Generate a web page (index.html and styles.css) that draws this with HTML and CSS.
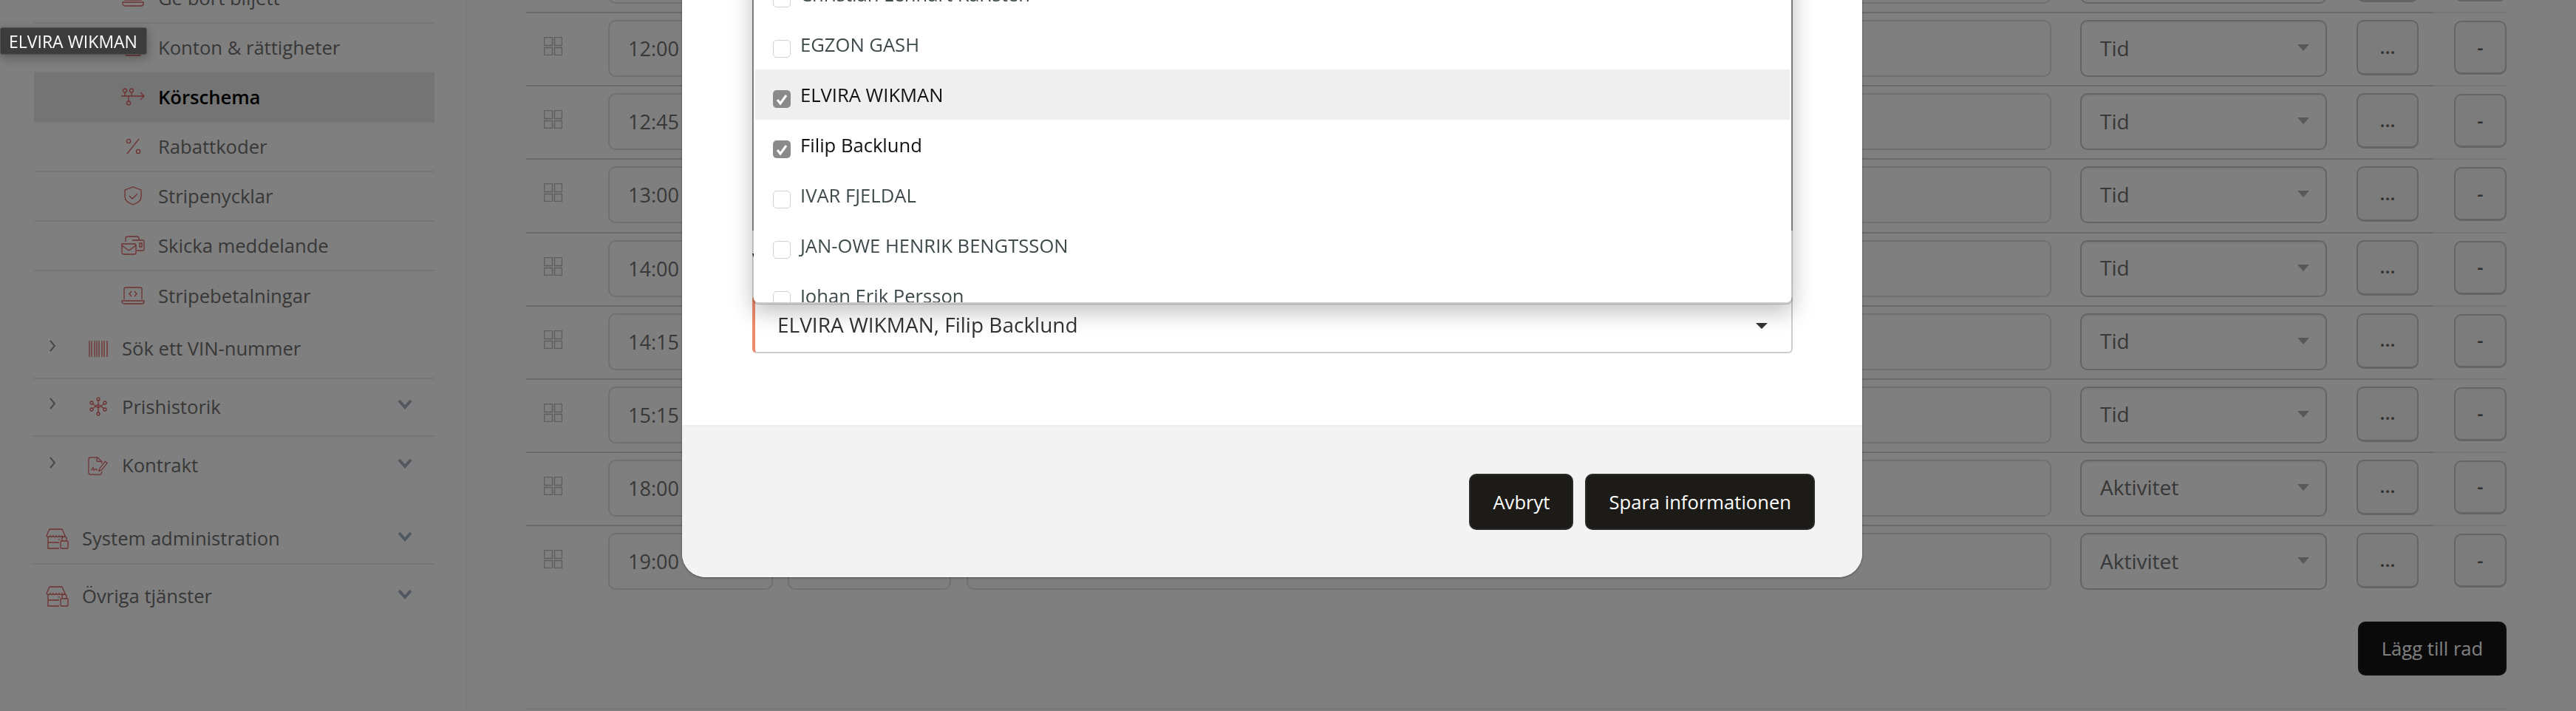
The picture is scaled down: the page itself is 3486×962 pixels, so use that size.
FILE: index.html

```html
<!DOCTYPE html>
<html lang="sv">
<head>
    <meta charset="UTF-8">
    <title>Körschema</title>
    <link rel="stylesheet" href="styles.css">
</head>
<body>
    <div class="page">
        <!-- Sidebar -->
        <nav class="side">
            <ul class="sub-list">
                <li class="sub-item">
                    <svg class="icon" width="32" height="26" viewBox="0 0 32 26"><path d="M5 2h22v14H5zM2 19h28v2a3 3 0 0 1-3 3H5a3 3 0 0 1-3-3z"/></svg>
                    <span>Ge bort biljett</span>
                </li>
                <li class="sub-item">
                    <svg class="icon" width="32" height="26" viewBox="0 0 32 26"><path d="M5 2h22v14H5zM5 19h22v2a3 3 0 0 1-3 3H8a3 3 0 0 1-3-3z"/></svg>
                    <span>Konton &amp; rättigheter</span>
                </li>
                <li class="sub-item active">
                    <svg class="icon" width="32" height="24" viewBox="0 0 32 24"><path d="M0 11h31M26 6l5 5-5 5M5 6v5M14 6v5M10 11v7"/><circle cx="5" cy="3.5" r="2.5"/><circle cx="14" cy="3.5" r="2.5"/><circle cx="10" cy="20.5" r="2.5"/></svg>
                    <span>Körschema</span>
                </li>
                <li class="sub-item">
                    <svg class="icon" width="32" height="22" viewBox="0 0 32 22"><path d="M8 21L24 1"/><circle cx="10" cy="4" r="2.6"/><circle cx="23" cy="18" r="2.6"/></svg>
                    <span>Rabattkoder</span>
                </li>
                <li class="sub-item">
                    <svg class="icon" width="32" height="26" viewBox="0 0 32 26"><path d="M16 1l11 4v9c0 5-5 9-11 11C10 23 5 19 5 14V5zM11 13l4 4 7-7"/></svg>
                    <span>Stripenycklar</span>
                </li>
                <li class="sub-item">
                    <svg class="icon" width="32" height="26" viewBox="0 0 32 26"><path d="M6 8V4a3 3 0 0 1 3-3h12a3 3 0 0 1 3 3v2M15 6h14a2 2 0 0 1 2 2v10a2 2 0 0 1-2 2h-8M1 11h17a2 2 0 0 1 2 2v10a2 2 0 0 1-2 2H3a2 2 0 0 1-2-2zM1 13l9.500 7 9.500-7M25 10h3v5h-3z"/></svg>
                    <span>Skicka meddelande</span>
                </li>
                <li class="sub-item">
                    <svg class="icon" width="32" height="24" viewBox="0 0 32 24"><path d="M4 17V3a2 2 0 0 1 2-2h20a2 2 0 0 1 2 2v14M1 19h30v1a3 3 0 0 1-3 3H4a3 3 0 0 1-3-3zM14 6l-3 3.500 3 3.500M18 6l3 3.500-3 3.500"/></svg>
                    <span>Stripebetalningar</span>
                </li>
            </ul>

            <ul class="group-list">
                <li class="group-item">
                    <svg class="arrow" width="8" height="16" viewBox="0 0 8 16"><path d="M1 1l6 7-6 7"/></svg>
                    <svg class="icon" width="28" height="22" viewBox="0 0 28 22"><path d="M2 0v22M5 0v22M9 0v22M12 0v22M15 0v22M19 0v22M22 0v22M26 0v22"/></svg>
                    <span>Sök ett VIN-nummer</span>
                </li>
                <li class="group-item">
                    <svg class="arrow" width="8" height="16" viewBox="0 0 8 16"><path d="M1 1l6 7-6 7"/></svg>
                    <svg class="icon" width="28" height="26" viewBox="0 0 28 26"><path d="M14 4v18M6 9l8 6 8-6M6 16l8-6 8 6"/><circle cx="14" cy="3" r="2"/><circle cx="14" cy="23" r="2"/><circle cx="5" cy="8" r="2"/><circle cx="23" cy="8" r="2"/><circle cx="5" cy="17" r="2"/><circle cx="23" cy="17" r="2"/></svg>
                    <span>Prishistorik</span>
                    <svg class="down" width="20" height="14" viewBox="0 0 20 14"><path d="M2 2l8 9 8-9"/></svg>
                </li>
                <li class="group-item">
                    <svg class="arrow" width="8" height="16" viewBox="0 0 8 16"><path d="M1 1l6 7-6 7"/></svg>
                    <svg class="icon" width="28" height="26" viewBox="0 0 30 26"><path d="M20 10V7l-6-6H4a3 3 0 0 0-3 3v19a3 3 0 0 0 3 3h13a3 3 0 0 0 3-3v-2M13 1v6h7M20 19l8-10-3-2-8 10-1 4zM5 20c2-5 3-5 3-2s2 1 3 0 1 2 3 1"/></svg>
                    <span>Kontrakt</span>
                    <svg class="down" width="20" height="14" viewBox="0 0 20 14"><path d="M2 2l8 9 8-9"/></svg>
                </li>
            </ul>

            <ul class="top-list">
                <li class="top-item">
                    <svg class="icon" width="32" height="28" viewBox="0 0 32 28"><path d="M6 1h17l4 9c-1 2-3 2-4 0-1 2-3 2-4 0-1 2-3 2-4 0-1 2-3 2-4 0-1 2-3 2-4 0-1 2-4 2-5 0zM4 12v15h15M4 19h15M19 14v2M22 27h8a1 1 0 0 0 1-1v-8a1 1 0 0 0-1-1h-8a1 1 0 0 0-1 1v8a1 1 0 0 0 1 1zM23 17v-3a3 3 0 0 1 6 0v3"/></svg>
                    <span>System administration</span>
                    <svg class="down" width="20" height="14" viewBox="0 0 20 14"><path d="M2 2l8 9 8-9"/></svg>
                </li>
                <li class="top-item">
                    <svg class="icon" width="32" height="28" viewBox="0 0 32 28"><path d="M6 1h17l4 9c-1 2-3 2-4 0-1 2-3 2-4 0-1 2-3 2-4 0-1 2-3 2-4 0-1 2-3 2-4 0-1 2-4 2-5 0zM4 12v15h15M4 19h15M19 14v2M22 27h8a1 1 0 0 0 1-1v-8a1 1 0 0 0-1-1h-8a1 1 0 0 0-1 1v8a1 1 0 0 0 1 1zM23 17v-3a3 3 0 0 1 6 0v3"/></svg>
                    <span>Övriga tjänster</span>
                    <svg class="down" width="20" height="14" viewBox="0 0 20 14"><path d="M2 2l8 9 8-9"/></svg>
                </li>
            </ul>
        </nav>

        <!-- Schedule rows -->
        <main class="schedule">
            <div class="row">
                <div class="row-main">
                    <svg class="grip" width="25" height="25" viewBox="0 0 25 25"><path d="M.5.5h11v11H.5zM14.500.5h10v11h-10zM.5 14.500h11v10H.5zM14.500 14.500h10v10h-10z"/></svg>
                    <div class="field time">11:30</div>
                    <div class="field stop"></div>
                    <div class="field note"></div>
                    <div class="field pick">Tid<i class="caret"></i></div>
                    <button class="btn-more">...</button>
                </div>
                <div class="row-end"><button class="btn-minus">-</button></div>
            </div>
            <div class="row">
                <div class="row-main">
                    <svg class="grip" width="25" height="25" viewBox="0 0 25 25"><path d="M.5.5h11v11H.5zM14.500.5h10v11h-10zM.5 14.500h11v10H.5zM14.500 14.500h10v10h-10z"/></svg>
                    <div class="field time">12:00</div>
                    <div class="field stop"></div>
                    <div class="field note"></div>
                    <div class="field pick">Tid<i class="caret"></i></div>
                    <button class="btn-more">...</button>
                </div>
                <div class="row-end"><button class="btn-minus">-</button></div>
            </div>
            <div class="row">
                <div class="row-main">
                    <svg class="grip" width="25" height="25" viewBox="0 0 25 25"><path d="M.5.5h11v11H.5zM14.500.5h10v11h-10zM.5 14.500h11v10H.5zM14.500 14.500h10v10h-10z"/></svg>
                    <div class="field time">12:45</div>
                    <div class="field stop"></div>
                    <div class="field note"></div>
                    <div class="field pick">Tid<i class="caret"></i></div>
                    <button class="btn-more">...</button>
                </div>
                <div class="row-end"><button class="btn-minus">-</button></div>
            </div>
            <div class="row">
                <div class="row-main">
                    <svg class="grip" width="25" height="25" viewBox="0 0 25 25"><path d="M.5.5h11v11H.5zM14.500.5h10v11h-10zM.5 14.500h11v10H.5zM14.500 14.500h10v10h-10z"/></svg>
                    <div class="field time">13:00</div>
                    <div class="field stop"></div>
                    <div class="field note"></div>
                    <div class="field pick">Tid<i class="caret"></i></div>
                    <button class="btn-more">...</button>
                </div>
                <div class="row-end"><button class="btn-minus">-</button></div>
            </div>
            <div class="row">
                <div class="row-main">
                    <svg class="grip" width="25" height="25" viewBox="0 0 25 25"><path d="M.5.5h11v11H.5zM14.500.5h10v11h-10zM.5 14.500h11v10H.5zM14.500 14.500h10v10h-10z"/></svg>
                    <div class="field time">14:00</div>
                    <div class="field stop"></div>
                    <div class="field note"></div>
                    <div class="field pick">Tid<i class="caret"></i></div>
                    <button class="btn-more">...</button>
                </div>
                <div class="row-end"><button class="btn-minus">-</button></div>
            </div>
            <div class="row">
                <div class="row-main">
                    <svg class="grip" width="25" height="25" viewBox="0 0 25 25"><path d="M.5.5h11v11H.5zM14.500.5h10v11h-10zM.5 14.500h11v10H.5zM14.500 14.500h10v10h-10z"/></svg>
                    <div class="field time">14:15</div>
                    <div class="field stop"></div>
                    <div class="field note"></div>
                    <div class="field pick">Tid<i class="caret"></i></div>
                    <button class="btn-more">...</button>
                </div>
                <div class="row-end"><button class="btn-minus">-</button></div>
            </div>
            <div class="row">
                <div class="row-main">
                    <svg class="grip" width="25" height="25" viewBox="0 0 25 25"><path d="M.5.5h11v11H.5zM14.500.5h10v11h-10zM.5 14.500h11v10H.5zM14.500 14.500h10v10h-10z"/></svg>
                    <div class="field time">15:15</div>
                    <div class="field stop"></div>
                    <div class="field note"></div>
                    <div class="field pick">Tid<i class="caret"></i></div>
                    <button class="btn-more">...</button>
                </div>
                <div class="row-end"><button class="btn-minus">-</button></div>
            </div>
            <div class="row">
                <div class="row-main">
                    <svg class="grip" width="25" height="25" viewBox="0 0 25 25"><path d="M.5.5h11v11H.5zM14.500.5h10v11h-10zM.5 14.500h11v10H.5zM14.500 14.500h10v10h-10z"/></svg>
                    <div class="field time">18:00</div>
                    <div class="field stop"></div>
                    <div class="field note"></div>
                    <div class="field pick">Aktivitet<i class="caret"></i></div>
                    <button class="btn-more">...</button>
                </div>
                <div class="row-end"><button class="btn-minus">-</button></div>
            </div>
            <div class="row">
                <div class="row-main">
                    <svg class="grip" width="25" height="25" viewBox="0 0 25 25"><path d="M.5.5h11v11H.5zM14.500.5h10v11h-10zM.5 14.500h11v10H.5zM14.500 14.500h10v10h-10z"/></svg>
                    <div class="field time">19:00</div>
                    <div class="field stop"></div>
                    <div class="field note"></div>
                    <div class="field pick">Aktivitet<i class="caret"></i></div>
                    <button class="btn-more">...</button>
                </div>
                <div class="row-end"><button class="btn-minus">-</button></div>
            </div>

            <div class="add-wrap"><button class="btn-add">Lägg till rad</button></div>
        </main>
    </div>

    <!-- Dimmed layer, modal and tooltip lie over the page -->
    <div class="backdrop"></div>

    <div class="tooltip">ELVIRA WIKMAN</div>

    <div class="modal">
        <div class="modal-body">
            <div class="old-field"></div>
            <label class="pick-label">V</label>
            <div class="driver-select">
                ELVIRA WIKMAN, Filip Backlund
                <i class="driver-caret"></i>
            </div>

            <ul class="dropdown">
                <li class="opt"><i class="check"></i><span>Christian Lennart Karlsten</span></li>
                <li class="opt"><i class="check"></i><span>EGZON GASH</span></li>
                <li class="opt hover on">
                    <i class="check"><svg width="24" height="24" viewBox="0 0 24 24"><path d="M6 13l4 5 8-11"/></svg></i>
                    <span>ELVIRA WIKMAN</span>
                </li>
                <li class="opt on">
                    <i class="check"><svg width="24" height="24" viewBox="0 0 24 24"><path d="M6 13l4 5 8-11"/></svg></i>
                    <span>Filip Backlund</span>
                </li>
                <li class="opt"><i class="check"></i><span>IVAR FJELDAL</span></li>
                <li class="opt"><i class="check"></i><span>JAN-OWE HENRIK BENGTSSON</span></li>
                <li class="opt"><i class="check"></i><span>Johan Erik Persson</span></li>
            </ul>
        </div>
        <div class="modal-foot">
            <button class="btn-dark">Avbryt</button>
            <button class="btn-dark">Spara informationen</button>
        </div>
    </div>
</body>
</html>
```

FILE: styles.css

```css
* {
    box-sizing: border-box;
}
html, body {
    height: 100%;
}
body {
    margin: 0;
    overflow: hidden;
    background: #fff;
    font-family: "Open Sans", "Liberation Sans", sans-serif;
    font-size: 25.6px;
    color: #707070;
}
ul {
    list-style: none;
    margin: 0;
    padding: 0;
}
button {
    font-family: inherit;
    font-size: 25.6px;
    padding: 0;
}

.page {
    display: flex;
    margin-top: -84px;
}

/* sidebar */
.side {
    width: 632px;
    flex: none;
    padding-top: 49px;
    border-right: 2px solid #f6f6f6;
}
.icon {
    flex: none;
    fill: none;
    stroke: #dc6262;
    stroke-width: 1.3;
}
.sub-list {
    margin-left: 46px;
    width: 542px;
}
.sub-item {
    display: flex;
    align-items: center;
    height: 67px;
    padding: 0 0 1px 118px;
    border-bottom: 2px solid #ededed;
}
.sub-item:last-child {
    border-bottom: none;
}
.sub-item .icon {
    margin-right: 18px;
}
.sub-item.active {
    background: #e8e8e8;
    color: #000;
    font-weight: 600;
}
.group-list {
    margin-left: 44px;
    width: 544px;
}
.group-item {
    display: flex;
    align-items: center;
    height: 78.5px;
    padding: 0 0 1px 23px;
    border-bottom: 2px solid #ededed;
}
.group-item:last-child {
    border-bottom: none;
}
.arrow {
    flex: none;
    margin: -8px 44px 0 0;
    fill: none;
    stroke: #8c8c8c;
    stroke-width: 2;
}
.group-item .icon {
    margin-right: 18px;
}
.down {
    flex: none;
    margin: -6px 30px 0 auto;
    fill: none;
    stroke: #a3b1be;
    stroke-width: 4;
}
.top-list {
    margin: 26.5px 0 0 42px;
    width: 546px;
}
.top-item {
    display: flex;
    align-items: center;
    height: 68px;
    padding: 0 0 1px 19px;
    border-bottom: 2px solid #ededed;
}
.top-item:last-child {
    height: 86px;
    border-bottom: none;
}
.top-item .icon {
    margin-right: 18px;
}

/* schedule */
.schedule {
    flex: 1;
    padding: 1px 94px 0 80px;
}
.row {
    display: flex;
    height: 99.15px;
}
.row-main {
    flex: 1;
    display: flex;
    align-items: flex-start;
    padding: 9px 0 0 24px;
    border-top: 2px solid #d2d2d2;
}
.row-end {
    width: 99px;
    flex: none;
    padding: 10px 0 0 27.5px;
    border-top: 2px solid #ebebeb;
}
.grip {
    flex: none;
    margin: 23px 62px 0 0;
    fill: none;
    stroke: #bdbdbd;
    stroke-width: 1.5;
}
.field {
    flex: none;
    height: 77px;
    display: flex;
    align-items: center;
    border: 2px solid #e0e0e0;
    border-radius: 10px;
    padding-left: 25px;
}
.time {
    width: 223px;
    margin-right: 20px;
    font-size: 27px;
}
.stop {
    width: 221px;
    margin-right: 21px;
}
.note {
    width: 1468px;
    margin-right: 39px;
}
.pick {
    width: 334px;
    margin-right: 40px;
    justify-content: space-between;
    padding-right: 22px;
    padding-bottom: 2px;
    border-color: #c8c8c8;
    box-shadow: inset 0 2px 2px rgba(0, 0, 0, .06);
    font-size: 28px;
}
.caret {
    width: 0;
    height: 0;
    border-left: 8px solid transparent;
    border-right: 8px solid transparent;
    border-top: 9px solid #b0b0b0;
}
.btn-more, .btn-minus {
    flex: none;
    background: #f8f8f8;
    border: 2px solid #c8c8c8;
    border-bottom-width: 3px;
    border-radius: 10px;
    color: #606060;
    font-weight: 600;
}
.btn-more {
    width: 84px;
    height: 75px;
    padding-bottom: 2px;
}
.btn-minus {
    width: 71.5px;
    height: 73px;
}
.add-wrap {
    display: flex;
    justify-content: flex-end;
    margin-top: 32px;
    padding-bottom: 44px;
    border-bottom: 2px solid #ebebeb;
}
.btn-add {
    width: 201px;
    height: 73px;
    background: #141414;
    border: 2px solid #1c1c1c;
    border-radius: 10px;
    color: #fff;
}

/* overlays */
.backdrop {
    position: fixed;
    inset: 0;
    background: rgba(0, 0, 0, .5);
}
.tooltip {
    position: absolute;
    left: 0;
    top: 37px;
    width: 199px;
    height: 37px;
    display: flex;
    align-items: center;
    padding-left: 11px;
    background: #3c3c3c;
    border: 1px solid #555;
    border-radius: 3px;
    box-shadow: 0 4px 14px rgba(0, 0, 0, .3);
    color: #fff;
    font-size: 23px;
}
.modal {
    position: absolute;
    left: 923px;
    top: -100px;
    width: 1597px;
    height: 881px;
    display: flex;
    flex-direction: column;
    background: #fff;
    border-radius: 0 0 32px 32px;
    box-shadow: 0 1px 3px rgba(0, 0, 0, .4);
    overflow: hidden;
}
.modal-body {
    position: relative;
    height: 675px;
    flex: none;
    padding: 0 94px 0 95px;
}
.old-field {
    height: 412px;
    border-left: 2px solid #a6a6a6;
    border-right: 2px solid #a6a6a6;
}
.pick-label {
    display: block;
    height: 88px;
    padding-top: 21px;
    font-size: 26px;
    color: #222;
}
.driver-select {
    position: relative;
    height: 78px;
    display: flex;
    align-items: center;
    padding-left: 30px;
    border: 2px solid #ccc;
    border-left: 4px solid #ee8a6c;
    border-radius: 6px;
    color: #333;
    font-size: 28px;
}
.driver-caret {
    position: absolute;
    right: 32px;
    top: 35px;
    width: 0;
    height: 0;
    border-left: 8px solid transparent;
    border-right: 8px solid transparent;
    border-top: 8px solid #333;
}
.dropdown {
    position: absolute;
    left: 95px;
    right: 94px;
    top: 0;
    height: 512px;
    overflow: hidden;
    padding: 58px 2px 0;
    background: #fff padding-box;
    border: solid rgba(0, 0, 0, .2);
    border-width: 0 2px 3px;
    border-radius: 0 0 8px 8px;
    box-shadow: 0 10px 30px rgba(0, 0, 0, .25);
}
.opt {
    display: flex;
    height: 68px;
    align-items: center;
    padding-left: 24px;
    color: #3f4a4d;
}
.opt.on {
    color: #111;
}
.opt.hover {
    background: #efefef;
}
.check {
    flex: none;
    width: 24px;
    height: 24px;
    margin: 11px 13px 0 0;
    background: #fff;
    border: 1.500px solid #d0d0d0;
    border-radius: 5px;
    display: block;
}
.opt.on .check {
    background: #8a8a8a;
    border: none;
}
.check svg {
    display: block;
    fill: none;
    stroke: #fff;
    stroke-width: 3;
}
.modal-foot {
    flex: 1;
    display: flex;
    justify-content: flex-end;
    gap: 16px;
    padding: 64px 64px 0 0;
    background: #f3f3f3;
    border-top: 2px solid #eceff1;
}
.btn-dark {
    height: 76px;
    padding: 0 30px;
    background: #1c1b17;
    border: 2px solid #2a2a2a;
    border-radius: 10px;
    color: #fff;
}
```
